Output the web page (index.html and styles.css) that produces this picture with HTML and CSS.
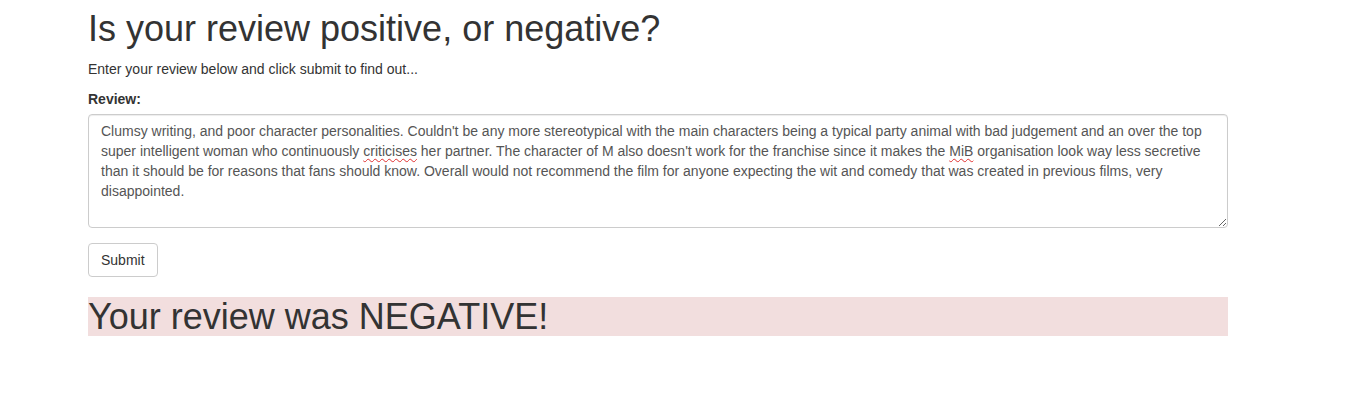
FILE: index.html
```html
<!DOCTYPE html>
<html lang="en">
<head>
<meta charset="utf-8">
<title>Review sentiment</title>
<link rel="stylesheet" href="styles.css">
</head>
<body>
<div class="container">
  <h1 class="title">Is your review positive, or negative?</h1>
  <p class="intro">Enter your review below and click submit to find out...</p>
  <form class="review-form">
    <div class="form-group">
      <label class="field-label">Review:</label>
      <div class="review-box" role="textbox" aria-multiline="true">Clumsy writing, and poor character personalities. Couldn't be any more stereotypical with the main characters being a typical party animal with bad judgement and an over the top super intelligent woman who continuously <span class="misspelt">criticises</span> her partner. The character of M also doesn't work for the franchise since it makes the <span class="misspelt">MiB</span> organisation look way less secretive than it should be for reasons that fans should know. Overall would not recommend the film for anyone expecting the wit and comedy that was created in previous films, very disappointed.</div>
    </div>
    <button type="button" class="btn">Submit</button>
  </form>
  <h1 class="result result-negative">Your review was NEGATIVE!</h1>
</div>
</body>
</html>
```
FILE: styles.css
```css
html, body {
  margin: 0;
  padding: 0;
  background: #fff;
}
body {
  font-family: "Liberation Sans", Arial, Helvetica, sans-serif;
  font-size: 14px;
  line-height: 1.42857143;
  color: #333;
}
.container {
  width: 1140px;
  margin-left: 88px;
}
.title,
.result {
  font-size: 36px;
  font-weight: 500;
  line-height: 1.1;
  margin: 9px 0 10px;
}
.result {
  margin-top: 20px;
}
.intro {
  margin: 0 0 10px;
}
.form-group {
  margin-bottom: 15px;
}
.field-label {
  display: inline-block;
  font-weight: bold;
  margin-bottom: 5px;
}
.review-box {
  box-sizing: border-box;
  display: block;
  width: 100%;
  height: 114px;
  padding: 6px 12px;
  border: 1px solid #ccc;
  border-radius: 4px;
  color: #555;
  background: #fff;
  box-shadow: inset 0 1px 1px rgba(0, 0, 0, 0.075);
  overflow: auto;
  resize: vertical;
}
.misspelt {
  text-decoration: underline wavy #e03030;
  text-decoration-thickness: 1px;
  text-underline-offset: 2px;
}
.btn {
  display: inline-block;
  font-family: inherit;
  font-size: 14px;
  line-height: 1.42857143;
  padding: 6px 12px;
  border: 1px solid #ccc;
  border-radius: 4px;
  background: #fff;
  color: #333;
  cursor: pointer;
}
.result-negative {
  background: #f2dede;
}
```
